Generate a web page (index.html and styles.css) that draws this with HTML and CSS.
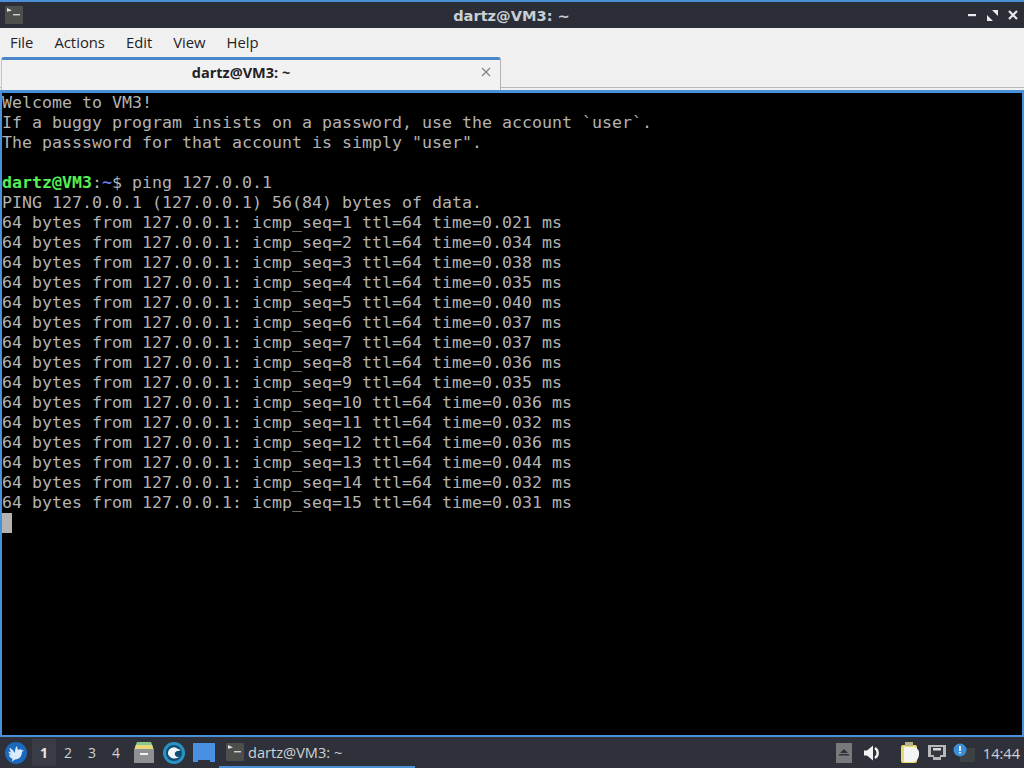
FILE: index.html
```html
<!DOCTYPE html>
<html lang="en">
<head>
<meta charset="utf-8">
<title>dartz@VM3: ~</title>
<link rel="stylesheet" href="styles.css">
</head>
<body>
<div class="window">
  <header class="titlebar">
    <span class="title-icon"><svg width="18" height="18" viewBox="0 0 18 18"><rect width="18" height="18" rx="1" fill="#4d4f4d"/><path d="M2 2l5 2.600-5 1.200z" fill="#e4e4e4"/><rect x="8" y="8" width="7" height="1.400" fill="#d0d0d0"/></svg></span>
    <span class="title-text">dartz@VM3: ~</span>
    <span class="win-buttons">
      <svg width="10" height="10" viewBox="0 0 10 10"><rect x="1" y="4" width="8" height="2.200" fill="#e8eaec"/></svg>
      <svg width="11" height="11" viewBox="0 0 11 11"><path d="M5 0h6v6zM0 5l6 6H0z" fill="#e8eaec"/></svg>
      <svg width="10" height="10" viewBox="0 0 10 10"><path d="M1 1l8 8M9 1l-8 8" stroke="#e8eaec" stroke-width="2.200"/></svg>
    </span>
  </header>
  <nav class="menubar">
    <span>File</span><span>Actions</span><span>Edit</span><span>View</span><span>Help</span>
  </nav>
  <div class="tabbar">
    <div class="tab">
      <span class="tab-label">dartz@VM3: ~</span>
      <svg class="tab-close" width="10" height="10" viewBox="0 0 10 10"><path d="M1 1l8 8M9 1l-8 8" stroke="#7d7f82" stroke-width="1.100"/></svg>
    </div>
  </div>
  <main class="terminal"><pre class="term-text">Welcome to VM3!
If a buggy program insists on a password, use the account `user`.
The passsword for that account is simply "user".

<b class="p-user">dartz@VM3</b>:<b class="p-path">~</b>$ ping 127.0.0.1
PING 127.0.0.1 (127.0.0.1) 56(84) bytes of data.
64 bytes from 127.0.0.1: icmp_seq=1 ttl=64 time=0.021 ms
64 bytes from 127.0.0.1: icmp_seq=2 ttl=64 time=0.034 ms
64 bytes from 127.0.0.1: icmp_seq=3 ttl=64 time=0.038 ms
64 bytes from 127.0.0.1: icmp_seq=4 ttl=64 time=0.035 ms
64 bytes from 127.0.0.1: icmp_seq=5 ttl=64 time=0.040 ms
64 bytes from 127.0.0.1: icmp_seq=6 ttl=64 time=0.037 ms
64 bytes from 127.0.0.1: icmp_seq=7 ttl=64 time=0.037 ms
64 bytes from 127.0.0.1: icmp_seq=8 ttl=64 time=0.036 ms
64 bytes from 127.0.0.1: icmp_seq=9 ttl=64 time=0.035 ms
64 bytes from 127.0.0.1: icmp_seq=10 ttl=64 time=0.036 ms
64 bytes from 127.0.0.1: icmp_seq=11 ttl=64 time=0.032 ms
64 bytes from 127.0.0.1: icmp_seq=12 ttl=64 time=0.036 ms
64 bytes from 127.0.0.1: icmp_seq=13 ttl=64 time=0.044 ms
64 bytes from 127.0.0.1: icmp_seq=14 ttl=64 time=0.032 ms
64 bytes from 127.0.0.1: icmp_seq=15 ttl=64 time=0.031 ms
</pre><div class="cursor"></div></main>
</div>
<footer class="panel">
  <svg class="start" width="24" height="24" viewBox="0 0 24 24"><circle cx="12" cy="12" r="11" fill="#1b68bd"/><path d="M5 7c2 0 4 2 6 5 0-3 0-5 2-7 0 2 1 3 1 4 1-1 3-1 4 0l2 1-2 .6c0 5-3 8-7 8l-3 2 .5-3c-2 0-3-2-4-4l3 1c-2-1-3-3-3-4 1 0 2 1 3 1-1-1-2-3-2-4.600z" fill="#dcecfa"/></svg>
  <div class="desktops"><span class="desk active">1</span><span class="desk">2</span><span class="desk">3</span><span class="desk">4</span></div>
  <svg class="launcher first" width="22" height="24" viewBox="0 0 22 24"><path d="M4 1h14l2 5H2z" fill="#8cc78a"/><path d="M3 4h16l2 5H1z" fill="#e6d77a"/><rect x="1" y="8" width="20" height="14" fill="#8f9092"/><rect x="7" y="12" width="8" height="2" fill="#f4f4f4"/></svg>
  <svg class="launcher" width="24" height="24" viewBox="0 0 24 24"><circle cx="12" cy="12" r="11" fill="#2b92c4"/><circle cx="12" cy="12" r="8" fill="#0d4d70"/><path d="M6 13a6 6 0 0 1 10-5l3 1-3 1a3 3 0 1 0 2 5 7 7 0 0 1-12-2z" fill="#f2f7fa"/></svg>
  <svg class="launcher" width="22" height="20" viewBox="0 0 22 20"><path d="M0 0h22v19h-5v-2H5v2H0z" fill="#4a90e2"/></svg>
  <div class="task">
    <svg width="18" height="18" viewBox="0 0 18 18"><rect width="18" height="18" rx="1" fill="#4d4f4d"/><path d="M2 2l5 2.600-5 1.200z" fill="#e4e4e4"/><rect x="8" y="8" width="7" height="1.400" fill="#d0d0d0"/></svg>
    <span>dartz@VM3: ~</span>
  </div>
  <div class="tray">
    <svg width="16" height="20" viewBox="0 0 16 20"><rect width="16" height="20" fill="#77797b"/><path d="M8 6l4 4H4z" fill="#2e3139"/><rect x="3" y="11" width="10" height="1.500" fill="#2e3139"/></svg>
    <svg class="tray-vol" width="17" height="16" viewBox="0 0 17 16"><path d="M0 5.500h3l6-5v15l-6-5H0z" fill="#f2f2f2"/><path d="M11 3a6 6 0 0 1 0 10" fill="none" stroke="#f2f2f2" stroke-width="2.400"/></svg>
    <svg class="tray-clip" width="20" height="22" viewBox="0 0 20 22"><rect x="1" y="3" width="16" height="18" rx="2" fill="#e9dc6c"/><rect x="5" y="0" width="8" height="4" fill="#b8b48a"/><path d="M4 5h10a6 6 0 0 1 5 7c0 5-3 8-7 8H4z" fill="#f4f4f2"/></svg>
    <svg class="tray-net" width="20" height="18" viewBox="0 0 20 18"><path d="M1 1h18v12h-5v3H6v-3H1z" fill="#b6b8ba"/><path d="M4 3h12v8h-3v2H7v-2H4z" fill="#34373d"/><path d="M6 4h8v2.500H6z" fill="#d8d8d8"/></svg>
    <svg class="tray-note" width="22" height="20" viewBox="0 0 22 20"><rect x="7" y="5" width="15" height="14" fill="#3c4144"/><circle cx="7" cy="7" r="6.500" fill="#3a8fd8"/><rect x="6.200" y="3" width="1.600" height="5" fill="#fff"/><rect x="6.200" y="9" width="1.600" height="1.600" fill="#fff"/></svg>
    <span class="clock">14:44</span>
  </div>
</footer>
</body>
</html>
```

FILE: styles.css
```css
* { box-sizing: border-box; }
html, body { margin: 0; padding: 0; }
body {
  width: 1024px;
  height: 768px;
  overflow: hidden;
  display: flex;
  flex-direction: column;
  font-family: "Open Sans", "Noto Sans", sans-serif;
  background: #2e3139;
}
.window { height: 737px; display: flex; flex-direction: column; }
.titlebar {
  height: 28px;
  flex: none;
  border-top: 2px solid #4a90d9;
  background: #2b2e37;
  display: flex;
  align-items: center;
  position: relative;
  padding-left: 5px;
}
.title-icon { display: flex; }
.title-text {
  position: absolute;
  left: 0;
  right: 0;
  text-align: center;
  color: #c9d0d6;
  font-family: "DejaVu Sans", sans-serif;
  font-weight: 700;
  font-size: 14.6px;
  padding-right: 1px;
}
.win-buttons {
  margin-left: auto;
  display: flex;
  align-items: center;
  gap: 10px;
  padding-right: 6px;
}
.menubar {
  height: 29px;
  flex: none;
  background: #f0f0f0;
  color: #1f2226;
  font-size: 14.8px;
  display: flex;
  align-items: center;
  gap: 21px;
  padding: 0 0 2px 10px;
}
.tabbar {
  height: 33px;
  flex: none;
  background: linear-gradient(#f0f0f0 30px, #b9babb 30px, #b9babb 31px, #f0f0f0 31px);
  padding-left: 1px;
  display: flex;
}
.tab {
  width: 500px;
  height: 33px;
  background: #f2f2f2;
  border-top: 3px solid #4a86c8;
  border-left: 1px solid #c4c4c4;
  border-right: 1px solid #b4b4b4;
  border-radius: 3px 3px 0 0;
  display: flex;
  align-items: center;
  position: relative;
}
.tab-label {
  width: 100%;
  text-align: center;
  font-weight: 700;
  font-size: 14.5px;
  color: #1f2226;
  padding: 0 20px 6px 0;
}
.tab-close { position: absolute; right: 9px; top: 7px; }
.terminal {
  flex: 1;
  background: #000;
  border-top: 3px solid #4a90d9;
  border-left: 2px solid #4a90d9;
  border-right: 2px solid #4a90d9;
  border-bottom: 2px solid #4a90d9;
  overflow: hidden;
}
.term-text {
  margin: 0;
  font-family: "DejaVu Sans Mono", monospace;
  font-size: 16.61px;
  line-height: 20px;
  color: #b3b3b3;
}
.p-user { color: #54f054; }
.p-path { color: #6a78e8; }
.cursor { width: 10px; height: 20px; background: #b3b3b3; }
.panel {
  flex: 1;
  background: #2e3139;
  display: flex;
  align-items: center;
  padding-left: 4px;
}
.start { flex: none; }
.desktops { display: flex; margin-left: 4px; }
.desk {
  width: 24px;
  height: 27px;
  color: #cfd2d6;
  font-size: 14px;
  text-align: center;
  line-height: 27px;
}
.desk.active { background: #393c45; color: #e4e6e8; font-weight: 700; }
.launcher { flex: none; margin-left: 7px; }
.launcher.first { margin-left: 5px; }
.task {
  margin-left: 4px;
  width: 196px;
  height: 31px;
  display: flex;
  align-items: center;
  gap: 4px;
  padding-left: 7px;
  border-bottom: 2px solid #4a90d9;
  color: #cfd2d6;
  font-size: 14.6px;
}
.tray {
  margin-left: auto;
  display: flex;
  align-items: center;
  padding-right: 4px;
}
.tray-vol { margin-left: 12px; }
.tray-clip { margin-left: 19px; }
.tray-net { margin-left: 7px; }
.tray-note { margin-left: 6px; }
.clock { margin-left: 8px; color: #cfd2d6; font-size: 14.6px; }
```
